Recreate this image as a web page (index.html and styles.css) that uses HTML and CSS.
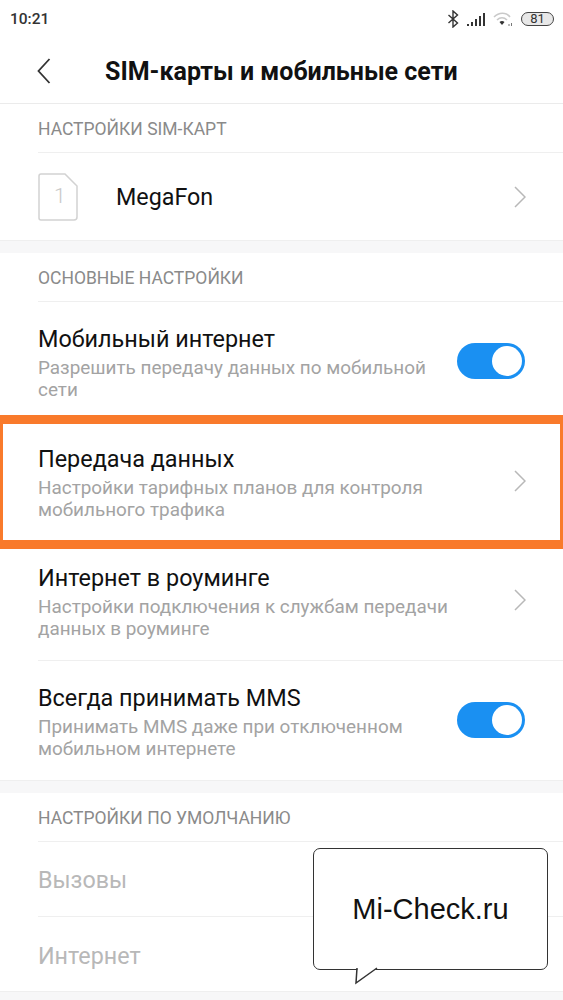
FILE: index.html
```html
<!DOCTYPE html>
<html lang="ru">
<head>
	<meta charset="UTF-8">
	<title>SIM-карты и мобильные сети</title>
	<link rel="stylesheet" href="styles.css">
</head>
<body>
<div class="screen">
	<div class="statusBar">
		<span class="clock">10:21</span>
		<div class="statusIcons">
			<svg class="iconBt" width="12" height="18" viewBox="0 0 12 18"><path d="M1.500 5l9 8-4.500 4V1l4.500 4-9 8" fill="none" stroke="#333" stroke-width="1.400"/></svg>
			<svg class="iconSignal" width="20" height="15" viewBox="0 0 20 15"><path d="M1 12h2v2H1zM5 10h2v4H5zM9 7h2v7H9zM13 4h2v10h-2zM17 1h2v13h-2z" fill="#333"/></svg>
			<svg class="iconWifi" width="21" height="16" viewBox="0 0 21 16"><path d="M1 6c5-5 12-5 16 0M4 9c3-3 7-3 10 0" fill="none" stroke="#c9c9c9" stroke-width="1.600"/><path d="M6.500 11c1.500-1.500 3.500-1.500 5 0L9 14z" fill="#333"/><path d="M16 13v2M18.500 12v3" stroke="#777" stroke-width="1"/></svg>
			<span class="battery">81</span>
		</div>
	</div>

	<div class="titleBar">
		<svg class="backIcon" width="14" height="26" viewBox="0 0 14 26"><path d="M12.500 1L1.500 13l11 12" fill="none" stroke="#333" stroke-width="1.800"/></svg>
		<h1 class="pageTitle">SIM-карты и мобильные сети</h1>
	</div>

	<div class="group">
		<div class="labelBar">НАСТРОЙКИ SIM-КАРТ</div>
		<div class="simRow">
			<svg class="simIcon" width="40" height="48" viewBox="0 0 40 48"><path d="M3 1h24l12 12v31a3 3 0 0 1-3 3H3a2 2 0 0 1-2-2V3a2 2 0 0 1 2-2z" fill="none" stroke="#d2d2d2" stroke-width="1.500"/></svg>
			<span class="simNum">1</span>
			<span class="simName">MegaFon</span>
			<svg class="arrow" width="12" height="22" viewBox="0 0 12 22"><path d="M1 1l10 10L1 21" fill="none" stroke="#b8b8b8" stroke-width="1.500"/></svg>
		</div>
	</div>

	<div class="group">
		<div class="labelBar">ОСНОВНЫЕ НАСТРОЙКИ</div>
		<div class="row">
			<div class="rowText">
				<div class="rowTitle">Мобильный интернет</div>
				<div class="rowDesc">Разрешить передачу данных по мобильной сети</div>
			</div>
			<span class="switch"></span>
		</div>
		<div class="row noLine">
			<div class="rowText">
				<div class="rowTitle">Передача данных</div>
				<div class="rowDesc">Настройки тарифных планов для контроля мобильного трафика</div>
			</div>
			<svg class="arrow" width="12" height="22" viewBox="0 0 12 22"><path d="M1 1l10 10L1 21" fill="none" stroke="#b8b8b8" stroke-width="1.500"/></svg>
		</div>
		<div class="row">
			<div class="rowText">
				<div class="rowTitle">Интернет в роуминге</div>
				<div class="rowDesc">Настройки подключения к службам передачи данных в роуминге</div>
			</div>
			<svg class="arrow" width="12" height="22" viewBox="0 0 12 22"><path d="M1 1l10 10L1 21" fill="none" stroke="#b8b8b8" stroke-width="1.500"/></svg>
		</div>
		<div class="row">
			<div class="rowText">
				<div class="rowTitle">Всегда принимать MMS</div>
				<div class="rowDesc">Принимать MMS даже при отключенном мобильном интернете</div>
			</div>
			<span class="switch"></span>
		</div>
	</div>

	<div class="group">
		<div class="labelBar">НАСТРОЙКИ ПО УМОЛЧАНИЮ</div>
		<div class="plainRow">Вызовы</div>
		<div class="plainRow">Интернет</div>
	</div>

	<div class="highlight"></div>

	<div class="bubble">
		Mi-Check.ru
		<svg class="bubbleTail" width="24" height="18" viewBox="0 0 24 18"><path d="M3.500 0h18v2.500L3 15z" fill="#fff"/><path d="M3 1L2 16 23 1" fill="none" stroke="#333" stroke-width="1.500"/></svg>
	</div>
</div>
</body>
</html>
```

FILE: styles.css
```css
* {
  box-sizing: border-box;
}
html, body {
  margin: 0;
  padding: 0;
}
body {
  background: #f7f7f8;
  font-family: Roboto, "Noto Sans", sans-serif;
}
.screen {
  position: relative;
  width: 563px;
  height: 1000px;
  overflow: hidden;
}
.statusBar {
  height: 40px;
  background: #fff;
  padding: 0 9px 2px 10px;
  display: flex;
  align-items: center;
  justify-content: space-between;
}
.clock {
  font-size: 15.5px;
  font-weight: 500;
  color: #333;
}
.statusIcons {
  display: flex;
  align-items: center;
  gap: 7px;
}
.battery {
  width: 33px;
  height: 14px;
  border: 1.5px solid #444;
  border-radius: 7px;
  font-size: 13px;
  line-height: 11px;
  text-align: center;
  color: #333;
  background: #e8e8e8;
}
.titleBar {
  height: 63.5px;
  background: #fff;
  border-bottom: 1px solid #ebebeb;
  padding: 0 0 0 37px;
  display: flex;
  align-items: center;
}
.pageTitle {
  margin: 0 0 0 54px;
  font-size: 25px;
  font-weight: 700;
  color: #111;
}
.group {
  background: #fff;
  padding-left: 38px;
  margin-bottom: 11.5px;
  border-bottom: 1px solid #efefef;
}
.labelBar {
  height: 49.5px;
  line-height: 50px;
  font-size: 17.5px;
  color: #8a8a8a;
  border-bottom: 1px solid #efefef;
}
.simRow {
  position: relative;
  height: 87px;
  display: flex;
  align-items: center;
  padding-right: 37px;
}
.simNum {
  position: absolute;
  left: 16px;
  top: 31px;
  font-size: 21px;
  font-weight: 300;
  color: #c8c8c8;
}
.simName {
  flex: 1;
  margin-left: 38px;
  font-size: 23.3px;
  color: #111;
}
.arrow {
  flex: none;
}
.row {
  height: 119.5px;
  display: flex;
  align-items: center;
  padding-right: 37px;
  border-bottom: 1px solid #efefef;
}
.row:last-child {
  border-bottom: none;
}
.row.noLine {
  border-bottom: none;
}
.rowText {
  flex: 1;
  padding-top: 3px;
}
.rowTitle {
  font-size: 23.4px;
  line-height: 30px;
  margin-bottom: 3px;
  color: #111;
}
.rowDesc {
  max-width: 420px;
  font-size: 18.9px;
  line-height: 22px;
  color: #a3a3a3;
}
.switch {
  position: relative;
  flex: none;
  width: 68px;
  height: 36px;
  margin-right: 1px;
  border-radius: 18px;
  background: #1a90f2;
}
.switch:after {
  content: " ";
  position: absolute;
  right: 3px;
  top: 3px;
  width: 30px;
  height: 30px;
  border-radius: 50%;
  background: #fff;
}
.plainRow {
  height: 75px;
  line-height: 77px;
  font-size: 23.3px;
  color: #b8b8b8;
  border-bottom: 1px solid #efefef;
}
.plainRow:last-child {
  height: 74px;
  line-height: 78px;
  border-bottom: none;
}
.highlight {
  position: absolute;
  left: 0;
  top: 415px;
  width: 563px;
  height: 134px;
  border: 9px solid #f97a2b;
  border-left-width: 3px;
  border-right-width: 3px;
}
.bubble {
  position: absolute;
  left: 313px;
  top: 848px;
  width: 235px;
  height: 122px;
  background: #fff;
  border: 1.500px solid #333;
  border-radius: 7px;
  text-align: center;
  line-height: 120px;
  font-size: 29px;
  color: #111;
  font-family: "Liberation Sans", Arial, sans-serif;
}
.bubbleTail {
  position: absolute;
  left: 40px;
  top: 118px;
}
```
